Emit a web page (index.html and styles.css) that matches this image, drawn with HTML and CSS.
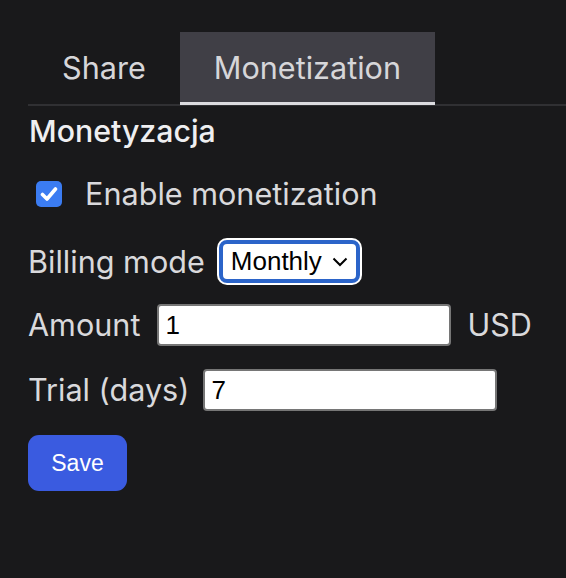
FILE: index.html
```html
<!DOCTYPE html>
<html lang="pl">
<head>
<meta charset="utf-8">
<title>Monetization</title>
<link rel="stylesheet" href="styles.css">
</head>
<body>
<div class="page">
  <nav class="tabs">
    <div class="tab">Share</div>
    <div class="tab active">Monetization</div>
  </nav>
  <section class="panel">
    <h2 class="heading">Monetyzacja</h2>
    <label class="row check-row">
      <span class="checkbox"><svg width="18" height="16" viewBox="0 0 18 16"><path d="M2.5 8.5 L7 13 L15.5 3" fill="none" stroke="#fff" stroke-width="3.6" stroke-linecap="round" stroke-linejoin="round"/></svg></span>
      <span class="label">Enable monetization</span>
    </label>
    <div class="row billing-row">
      <span class="label">Billing mode</span>
      <div class="select"><span class="select-text">Monthly</span><svg class="chev" width="16" height="10" viewBox="0 0 16 10"><path d="M1.5 1.5 L8 8 L14.5 1.5" fill="none" stroke="#000" stroke-width="2"/></svg></div>
    </div>
    <div class="row amount-row">
      <span class="label">Amount</span>
      <div class="input">1</div>
      <span class="label usd">USD</span>
    </div>
    <div class="row trial-row">
      <span class="label">Trial (days)</span>
      <div class="input">7</div>
    </div>
    <button class="save">Save</button>
  </section>
</div>
</body>
</html>
```
FILE: styles.css
```css
html, body {
  margin: 0;
  padding: 0;
  background: #19191b;
}
body {
  width: 566px;
  height: 578px;
  overflow: hidden;
  font-family: Inter, "Noto Sans", sans-serif;
  color: #d9d9dc;
}
.page {
  padding: 32px 0 0 28px;
}
.tabs {
  display: flex;
  border-bottom: 2px solid #303033;
}
.tab {
  height: 70px;
  padding: 0 34px 0 34px;
  display: flex;
  align-items: center;
  font-size: 30.6px;
  color: #d6d6d9;
  border-bottom: 3px solid transparent;
  margin-bottom: -1px;
}
.tab.active {
  background: #403f46;
  border-bottom-color: #dcdce0;
}
.panel {
  display: flex;
  flex-direction: column;
  align-items: flex-start;
}
.heading {
  margin: 7px 0 0 1px;
  font-size: 30.3px;
  font-weight: 500;
  line-height: 36px;
  color: #efeff1;
}
.row {
  display: flex;
  align-items: center;
}
.label {
  font-size: 30.6px;
  line-height: 36px;
  color: #d9d9dc;
}
.check-row {
  margin-top: 27px;
  height: 36px;
}
.checkbox {
  width: 26px;
  height: 26px;
  margin: 0 23px 0 8px;
  border-radius: 5px;
  background: #3b7cf2;
  display: flex;
  align-items: center;
  justify-content: center;
}
.billing-row {
  margin-top: 28px;
  gap: 14px;
}
.select {
  display: flex;
  align-items: center;
  height: 35px;
  padding: 0 8px 0 8px;
  background: #fff;
  border: 4px solid #2b64c9;
  border-radius: 8px;
  box-shadow: 0 0 0 2px #fff;
}
.select-text {
  font-family: "Liberation Sans", Arial, sans-serif;
  font-size: 26px;
  color: #000;
}
.chev {
  margin-left: 10px;
}
.amount-row {
  margin-top: 21px;
  gap: 17px;
}
.amount-row .usd {
  margin-left: -1px;
}
.trial-row {
  margin-top: 23px;
  gap: 14px;
}
.input {
  box-sizing: border-box;
  width: 294px;
  height: 42px;
  padding: 0 6px;
  background: #fff;
  border: 2px solid #767676;
  border-radius: 4px;
  font-family: "Liberation Sans", Arial, sans-serif;
  font-size: 26px;
  line-height: 38px;
  color: #000;
}
.save {
  margin-top: 24px;
  width: 99px;
  height: 56px;
  border: none;
  border-radius: 11px;
  background: #3a5be0;
  color: #fff;
  font-family: "Liberation Sans", Arial, sans-serif;
  font-size: 23px;
  padding: 0;
}
```
